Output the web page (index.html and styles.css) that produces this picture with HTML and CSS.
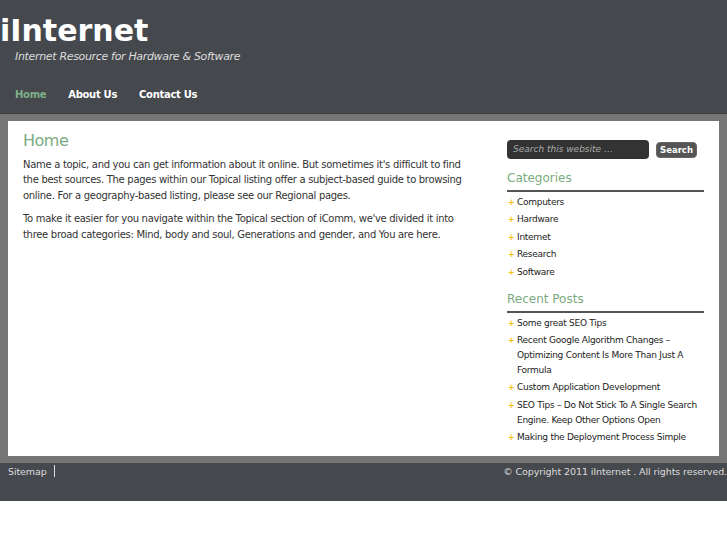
FILE: index.html
```html
<!DOCTYPE html>
<html>
<head>
<meta charset="utf-8">
<link rel="stylesheet" href="styles.css">
</head>
<body>
<div class="header">
  <div class="title">iInternet</div>
  <div class="tagline">Internet Resource for Hardware &amp; Software</div>
  <ul class="nav">
    <li class="current">Home</li>
    <li>About Us</li>
    <li>Contact Us</li>
  </ul>
</div>
<div class="band">
  <div class="box">
    <div class="main">
      <h1>Home</h1>
      <p>Name a topic, and you can get information about it online. But sometimes it's difficult to find the best sources. The pages within our Topical listing offer a subject-based guide to browsing online. For a geography-based listing, please see our Regional pages.</p>
      <p>To make it easier for you navigate within the Topical section of iComm, we've divided it into three broad categories: Mind, body and soul, Generations and gender, and You are here.</p>
    </div>
    <div class="sidebar">
      <div class="search">
        <div class="search-input">Search this website …</div>
        <div class="search-btn">Search</div>
      </div>
      <h2>Categories</h2>
      <ul class="list">
        <li>Computers</li>
        <li>Hardware</li>
        <li>Internet</li>
        <li>Research</li>
        <li>Software</li>
      </ul>
      <h2>Recent Posts</h2>
      <ul class="list">
        <li>Some great SEO Tips</li>
        <li>Recent Google Algorithm Changes – Optimizing Content Is More Than Just A Formula</li>
        <li>Custom Application Development</li>
        <li>SEO Tips – Do Not Stick To A Single Search Engine. Keep Other Options Open</li>
        <li>Making the Deployment Process Simple</li>
      </ul>
    </div>
  </div>
</div>
<div class="footer">
  <div class="foot-left">Sitemap <span class="sep"></span></div>
  <div class="foot-right">© Copyright 2011 iInternet . All rights reserved.</div>
</div>
</body>
</html>
```
FILE: styles.css
```css
* { box-sizing: border-box; }
body {
  margin: 0;
  background: #fff;
  font-family: "DejaVu Sans", Verdana, sans-serif;
  color: #333;
}
.header {
  background: #45484d;
  height: 114px;
  border-bottom: 1px solid #3a3c40;
  padding-top: 13px;
}
.title {
  font-size: 30px;
  font-weight: bold;
  line-height: 35px;
  color: #fff;
  height: 35px;
}
.tagline {
  font-size: 11px;
  font-style: italic;
  color: #ddd;
  padding-left: 15px;
  margin-top: 2px;
  line-height: 14px;
  letter-spacing: -0.03em;
}
.nav {
  list-style: none;
  margin: 24px 0 0 0;
  padding: 0 0 0 15px;
  display: flex;
  gap: 22px;
}
.nav li {
  font-size: 10px;
  font-weight: bold;
  color: #fff;
  line-height: 14px;
  letter-spacing: -0.03em;
}
.nav li.current { color: #7fb08a; }
.band {
  background: #767676;
  padding: 7px 8px;
}
.box {
  background: #fff;
  height: 335px;
  display: flex;
  padding: 10px 15px 0 15px;
}
.main {
  width: 455px;
}
h1 {
  font-size: 16px;
  font-weight: normal;
  color: #7aab80;
  margin: 0 0 6px 0;
  line-height: 20px;
  letter-spacing: -0.03em;
}
.main p {
  font-size: 10px;
  line-height: 15.4px;
  margin: 0 0 8px 0;
  letter-spacing: -0.03em;
}
.sidebar {
  width: 197px;
  margin-left: 29px;
  padding-top: 9px;
}
.search {
  display: flex;
  align-items: center;
  gap: 7px;
}
.search-input {
  width: 142px;
  height: 19px;
  background: #333;
  border-radius: 4px;
  color: #aaa;
  font-style: italic;
  font-size: 9px;
  line-height: 19px;
  padding-left: 6px;
}
.search-btn {
  width: 41px;
  height: 16px;
  background: #555;
  border-radius: 4px;
  border: 1px solid #666;
  color: #fff;
  font-weight: bold;
  font-size: 8.5px;
  line-height: 14px;
  text-align: center;
}
h2 {
  font-size: 12px;
  font-weight: normal;
  color: #7aab80;
  margin: 11px 0 0 0;
  line-height: 16px;
  padding-bottom: 4px;
  border-bottom: 2px solid #555;
}
.list {
  list-style: none;
  margin: 3px 0 0 0;
  padding: 0;
}
.list li {
  font-size: 9px;
  line-height: 15px;
  color: #222;
  padding-left: 10px;
  margin-bottom: 2.4px;
  position: relative;
  letter-spacing: -0.03em;
}
.list li::before {
  content: "+";
  position: absolute;
  left: 1px;
  top: 0;
  color: #f2c200;
  font-weight: bold;
  font-size: 8px;
}
.footer {
  background: #45484d;
  height: 38px;
  display: flex;
  justify-content: space-between;
  padding: 2px 0 0 8px;
  font-size: 9.5px;
  color: #ddd;
  line-height: 14px;
  letter-spacing: -0.01em;
}
.sep {
  display: inline-block;
  width: 1px;
  height: 12px;
  background: #ddd;
  margin-left: 4px;
  vertical-align: -2px;
}
```
